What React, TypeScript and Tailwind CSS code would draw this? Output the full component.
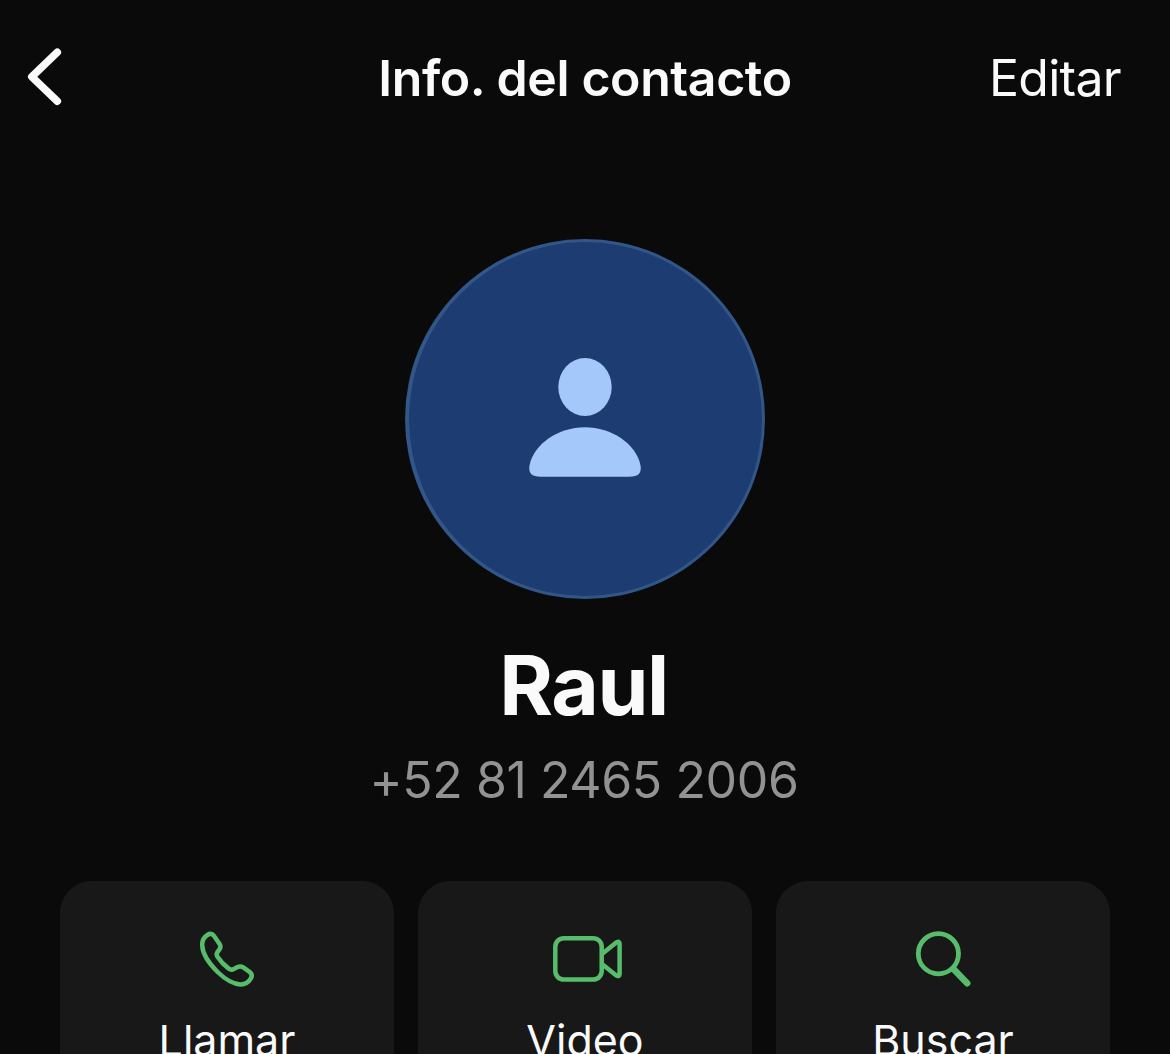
import type { ReactNode } from "react";

function PhoneIcon() {
  return (
    <svg width="100" height="90" viewBox="-3 0 100 90" fill="none" stroke="#57bd6c" strokeWidth="4.5" strokeLinejoin="round" strokeLinecap="round">
      <path d="M34.4 21.4 L39.6 29 Q41.3 31.6 39.6 34.2 L37.4 37.2 Q36 39.2 37.3 41.4 C40.5 46.3 44 50 48.8 53.6 Q51.2 55.4 53.8 54 L57.6 52.1 Q60.6 50.6 63.2 52.4 L69.2 56.6 Q73.2 59.4 70.9 63.4 C68.4 67.6 65 69.5 60.4 69.4 C52.5 69.2 44.7 63.8 37.6 57 C28.8 48.4 22.5 38.4 22.2 30.2 C22 25.6 24.2 22 27.4 20 Q31.4 17.4 34.4 21.4 Z" />
    </svg>
  );
}

function VideoIcon() {
  return (
    <svg width="100" height="90" viewBox="0 0 100 90" fill="none" stroke="#57bd6c" strokeWidth="4.5" strokeLinejoin="round">
      <rect x="20.3" y="23.2" width="46.4" height="41.4" rx="8.5" />
      <path d="M67.6 38.4 L80.6 27.9 Q84.6 25 84.6 29.4 V58.4 Q84.6 62.8 80.6 59.9 L67.6 49.4" />
    </svg>
  );
}

function SearchIcon() {
  return (
    <svg width="100" height="90" viewBox="-7 0 100 90" fill="none" stroke="#57bd6c" strokeLinecap="round">
      <circle cx="38.4" cy="38.7" r="20.1" strokeWidth="4.8" />
      <path d="M54 54.5 L67.2 68.2" strokeWidth="6.6" />
    </svg>
  );
}

function ActionCard({ icon, children }: { icon: ReactNode; children: ReactNode }) {
  return (
    <button className="flex h-60 flex-1 flex-col items-center rounded-[32px] bg-[#181818] pt-[34px]">
      {icon}
      <span className="mt-[10px] text-[43px] leading-[50px] text-[#fafafa]">{children}</span>
    </button>
  );
}

export default function App() {
  return (
    <main className="flex h-[1054px] w-[1170px] flex-col items-center overflow-hidden bg-[#0a0a0a] font-['Inter',sans-serif] text-[#fafafa]">
      <header className="grid h-[156px] w-full shrink-0 grid-cols-[1fr_auto_1fr] items-center px-[49px]">
        <button aria-label="Atrás" className="-ml-[29px] justify-self-start">
          <svg width="50" height="70" viewBox="0 0 50 70" fill="none" stroke="#fafafa" strokeWidth="7.6" strokeLinecap="round" strokeLinejoin="round">
            <path d="M37.3 9.3 L11.8 33.7 L37.3 58.2" />
          </svg>
        </button>
        <h1 className="text-[50px] leading-[60px] font-semibold tracking-[-0.4px] whitespace-nowrap">Info. del contacto</h1>
        <button className="justify-self-end text-[50px] leading-[60px] tracking-[-0.7px]">Editar</button>
      </header>
      <div className="mt-[83px] flex size-[360px] shrink-0 items-center justify-center rounded-full border-3 border-l-4 border-[#335688] bg-[#1c3c72]">
        <svg className="-mt-[4px] -ml-px" width="140" height="145" viewBox="0 0 140 145" fill="#a5c8fb">
          <ellipse cx="70" cy="42" rx="26.7" ry="29" />
          <path d="M70 82.3 C97 82.3 121 99 125.4 120 C127 128 123.5 131.8 114 131.8 H26 C16.5 131.8 13 128 14.6 120 C19 99 43 82.3 70 82.3 Z" />
        </svg>
      </div>
      <h2 className="mt-[42px] shrink-0 pr-[3px] text-[82px] leading-[90px] font-bold tracking-[-1.5px]">Raul</h2>
      <p className="mt-[18px] shrink-0 pr-[2px] text-[50px] leading-[62px] tracking-[-0.4px] text-[#929292]">+52 81 2465 2006</p>
      <section className="mt-[70px] flex w-[1050px] shrink-0 gap-6">
        <ActionCard icon={<PhoneIcon />}>Llamar</ActionCard>
        <ActionCard icon={<VideoIcon />}>Video</ActionCard>
        <ActionCard icon={<SearchIcon />}>Buscar</ActionCard>
      </section>
    </main>
  );
}
